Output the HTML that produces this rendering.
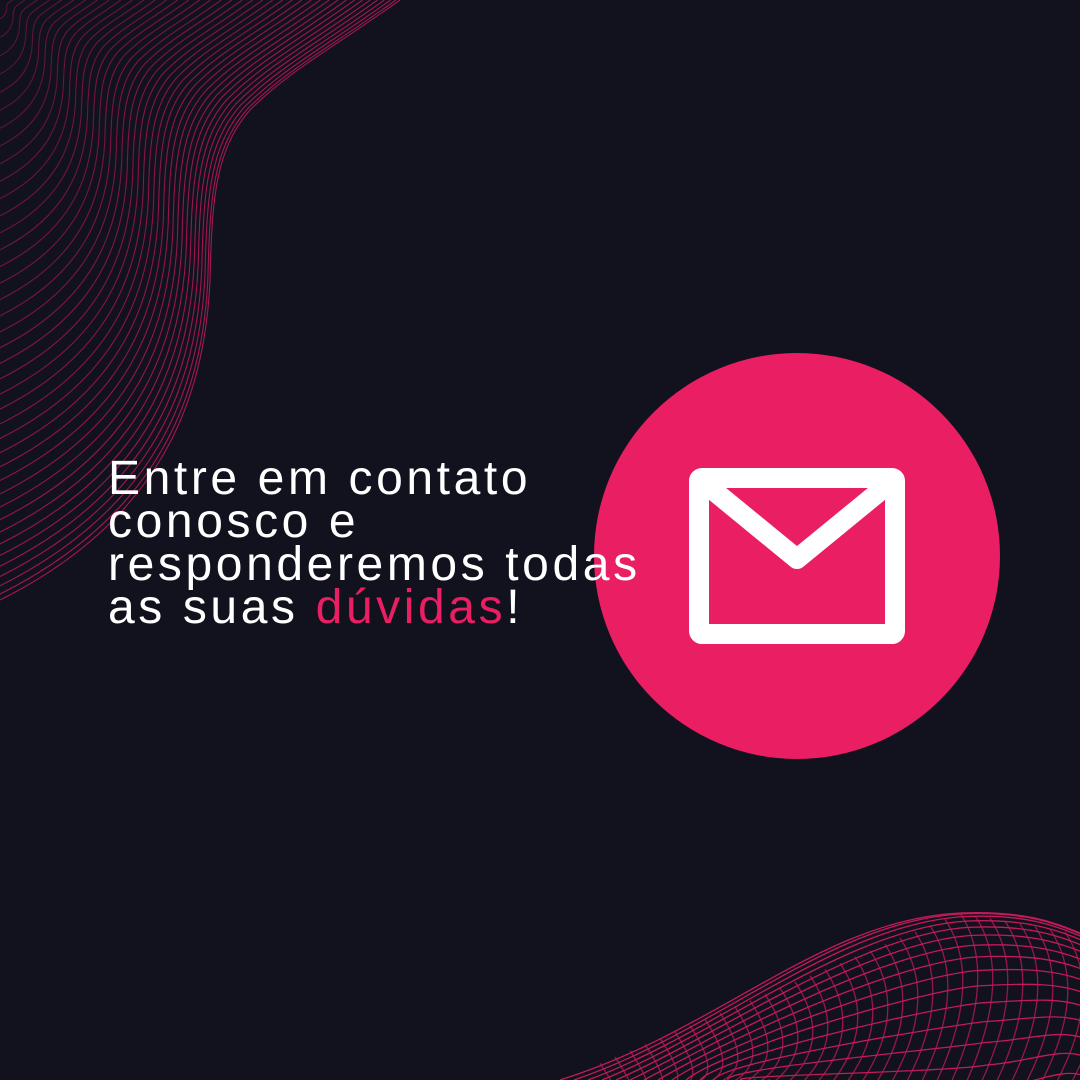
<!DOCTYPE html>
<html><head><meta charset="utf-8">
<style>
html,body{margin:0;padding:0;background:#11121d;}
#c{position:relative;width:1080px;height:1080px;overflow:hidden;background:#11121d;}
svg{position:absolute;left:0;top:0;}
#t{position:absolute;left:108px;top:457px;font-family:"Liberation Sans",sans-serif;font-size:48px;line-height:43px;color:#fff;letter-spacing:3.6px;white-space:nowrap;}
#t span{color:#e91e63;}
</style></head><body>
<div id="c">
<svg id="s" width="1080" height="1080" viewBox="0 0 1080 1080">
<g id="tl" fill="none" stroke="#c2185b" stroke-width="1.1" opacity="0.85"></g>
<g id="br" fill="none" stroke="#d81b60" stroke-width="1.3" opacity="0.9"></g>
<circle cx="797" cy="556" r="203" fill="#e91e63"/>
<rect x="699" y="478" width="196" height="156" rx="3" fill="none" stroke="#fff" stroke-width="20" stroke-linejoin="round"/>
<path d="M703 482 L797 559 L891 482" fill="none" stroke="#fff" stroke-width="20" stroke-linejoin="round"/>
</svg>
<div id="t">Entre em contato<br>conosco e<br>responderemos todas<br>as suas <span>dúvidas</span>!</div>
</div>
<script>
var ns="http://www.w3.org/2000/svg";
var tl=document.getElementById("tl"),N=40;
for(var i=0;i<N;i++){
 var s=1-Math.pow(i/N,1.25);
 var d="M"+(400*s)+",0 C"+(330*s)+","+(50*s)+" "+(290*s)+","+(70*s)+" "+(250*s)+","+(110*s)+
 " C"+(215*s)+","+(150*s)+" "+(212*s)+","+(200*s)+" "+(210*s)+","+(280*s)+
 " C"+(205*s)+","+(400*s)+" "+(160*s)+","+(520*s)+" 0,"+(600*s);
 var p=document.createElementNS(ns,"path");p.setAttribute("d",d);
 p.setAttribute("opacity",(0.45+0.55*(1-i/N)).toFixed(2));tl.appendChild(p);
}
var br=document.getElementById("br");
for(var i=0;i<16;i++){
 var k=i*i*0.9;
 var d="M"+(560+i*14)+",1080 C"+(720)+","+(1030+k*0.3)+" "+(820+i*10)+","+(920+k)+" "+(960+i*2)+","+(913+k)+
 " C"+(1030)+","+(910+k)+" "+(1060)+","+(925+k*0.8)+" 1085,"+(935+k*0.8);
 var p=document.createElementNS(ns,"path");p.setAttribute("d",d);br.appendChild(p);
}
for(var j=0;j<34;j++){
 var x=600+j*15;
 var ty=x<960?1080-(x-560)/400*167:913+(x-960)*0.18;
 var d="M"+x+","+ty+" Q"+(x+40)+","+(ty+60)+" "+(x-10)+",1085";
 var p=document.createElementNS(ns,"path");p.setAttribute("d",d);p.setAttribute("opacity","0.75");br.appendChild(p);
}
</script>
</body></html>
